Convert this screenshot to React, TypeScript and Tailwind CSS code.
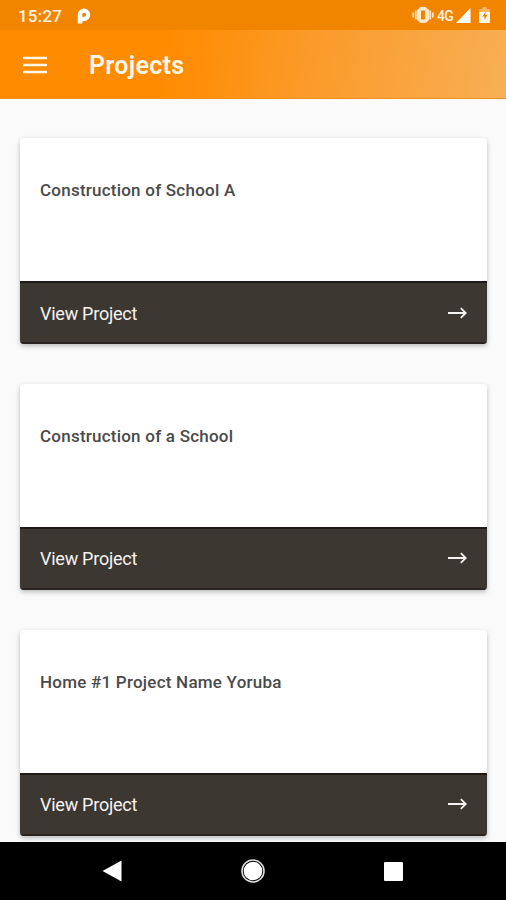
interface Project {
  id: number;
  name: string;
}

const PROJECTS: Project[] = [
  { id: 1, name: "Construction of School A" },
  { id: 2, name: "Construction of a School" },
  { id: 3, name: "Home #1 Project Name Yoruba" },
];

function StatusBar() {
  return (
    <div className="flex h-[30px] shrink-0 items-center bg-[#f18500] pl-[18px] pr-[16px] text-[#fff3e2]">
      <span className="mt-[2px] text-[17px] leading-5 font-medium tracking-[0.2px]">15:27</span>
      <svg className="mt-px ml-[15px] h-4 w-3.5" viewBox="0 0 14 16">
        <path
          d="M.8 15.500V6.800A6.200 6.200 0 1 1 7.300 12.900H5.600V14a1.500 1.500 0 0 1-1.500 1.500zM7.200 4.800a2 2 0 0 0-2 2v2h2a2 2 0 0 0 0-4z"
          fill="#fff"
          fillRule="evenodd"
        />
      </svg>

      <div className="ml-auto flex items-center">
        {/* Vibrate */}
        <svg className="h-4 w-[22px]" viewBox="0 0 22 16">
          <path d="M1.200 5.500v5M3.800 3.500v9M18.200 3.500v9M20.800 5.500v5" stroke="#ffe3c0" strokeWidth="1.800" />
          <path
            d="M8.500 0h5L17 3v10l-3.500 3h-5L5 13V3zM9 3.500v9h4v-9z"
            fill="#ffe9cf"
            fillRule="evenodd"
          />
        </svg>
        <span className="mt-px ml-[3px] text-[14px] leading-4 font-medium tracking-[-0.8px]">4G</span>
        <svg className="ml-[3px] h-[15px] w-[15px]" viewBox="0 0 15 15">
          <path d="M14.500 0v15H0z" fill="#fff" />
        </svg>
        {/* Battery */}
        <svg className="ml-[8px] h-4 w-[11px]" viewBox="0 0 11 16">
          <path d="M3.500 0h4v2H10a1 1 0 0 1 1 1v12a1 1 0 0 1-1 1H1a1 1 0 0 1-1-1V3a1 1 0 0 1 1-1h2.500z" fill="#fbb765" />
          <path d="M0 5h11v10a1 1 0 0 1-1 1H1a1 1 0 0 1-1-1z" fill="#fff6ea" />
          <path d="M6.600 5 3.300 9.600h2.200v3.200l2.900-4.700H6.200z" fill="#ee7f00" />
        </svg>
      </div>
    </div>
  );
}

function Header() {
  return (
    <header className="flex h-[69px] shrink-0 items-center border-b border-[#ee8f1c] bg-[linear-gradient(100deg,#ff8b00_0%,#ff8b00_33%,#fb9a28_60%,#f8af55_100%)] pl-[23px]">
      <svg className="mt-px h-[18px] w-[24px]" viewBox="0 0 24 18" stroke="#fff6ea" strokeWidth="2.600">
        <path d="M0 2h24M0 9h24M0 16h24" />
      </svg>
      <h1 className="mt-[3px] ml-[42px] text-[25px] leading-8 font-semibold tracking-[0.3px] text-[#fff6ea]">Projects</h1>
    </header>
  );
}

function ProjectCard({ project }: { project: Project }) {
  return (
    <div className="flex h-[206px] shrink-0 flex-col overflow-hidden rounded-[4px] bg-white shadow-[0_2px_5px_rgba(0,0,0,0.26)]">
      <div className="flex-1 px-5 pt-10">
        <h2 className="text-[17px] leading-6 font-medium tracking-[0.23px] text-[#4a4a4a]">{project.name}</h2>
      </div>
      <button className="flex h-[63px] items-center justify-between border-y-2 border-t-[#1f1a17] border-b-[#2a2322] bg-[#3d3731] px-5 text-[#f5f3f1]">
        <span className="mt-[2px] text-[18px] leading-6 tracking-[-0.25px]">View Project</span>
        <svg className="h-3 w-[19px]" viewBox="0 0 19 12" fill="none" stroke="currentColor" strokeWidth="1.800">
          <path d="M0 6h17.500M12.800 1.200 17.800 6l-5 4.800" />
        </svg>
      </button>
    </div>
  );
}

function NavigationBar() {
  return (
    <nav className="grid h-[58px] shrink-0 grid-cols-3 items-center justify-items-center bg-black px-[43px]">
      <svg className="mr-[2px] h-[22px] w-5" viewBox="0 0 20 22">
        <path d="M19.500 .5v21L.5 11z" fill="#fff" />
      </svg>
      <svg className="h-6 w-6" viewBox="0 0 24 24">
        <circle cx="12" cy="12" r="11" fill="none" stroke="#dcdcdc" strokeWidth="1.600" />
        <circle cx="12" cy="12" r="9.300" fill="#fff" />
      </svg>
      <div className="h-[19px] w-[19px] rounded-[1px] bg-white" />
    </nav>
  );
}

export default function App() {
  return (
    <div className="flex h-[900px] w-[506px] flex-col overflow-hidden bg-[#fafafa] font-['Roboto',sans-serif]">
      <StatusBar />
      <Header />
      <main className="flex min-h-0 flex-1 flex-col gap-[39.800px] overflow-hidden pt-[39px] pr-[19px] pl-5">
        {PROJECTS.map((project) => (
          <ProjectCard key={project.id} project={project} />
        ))}
      </main>
      <NavigationBar />
    </div>
  );
}
